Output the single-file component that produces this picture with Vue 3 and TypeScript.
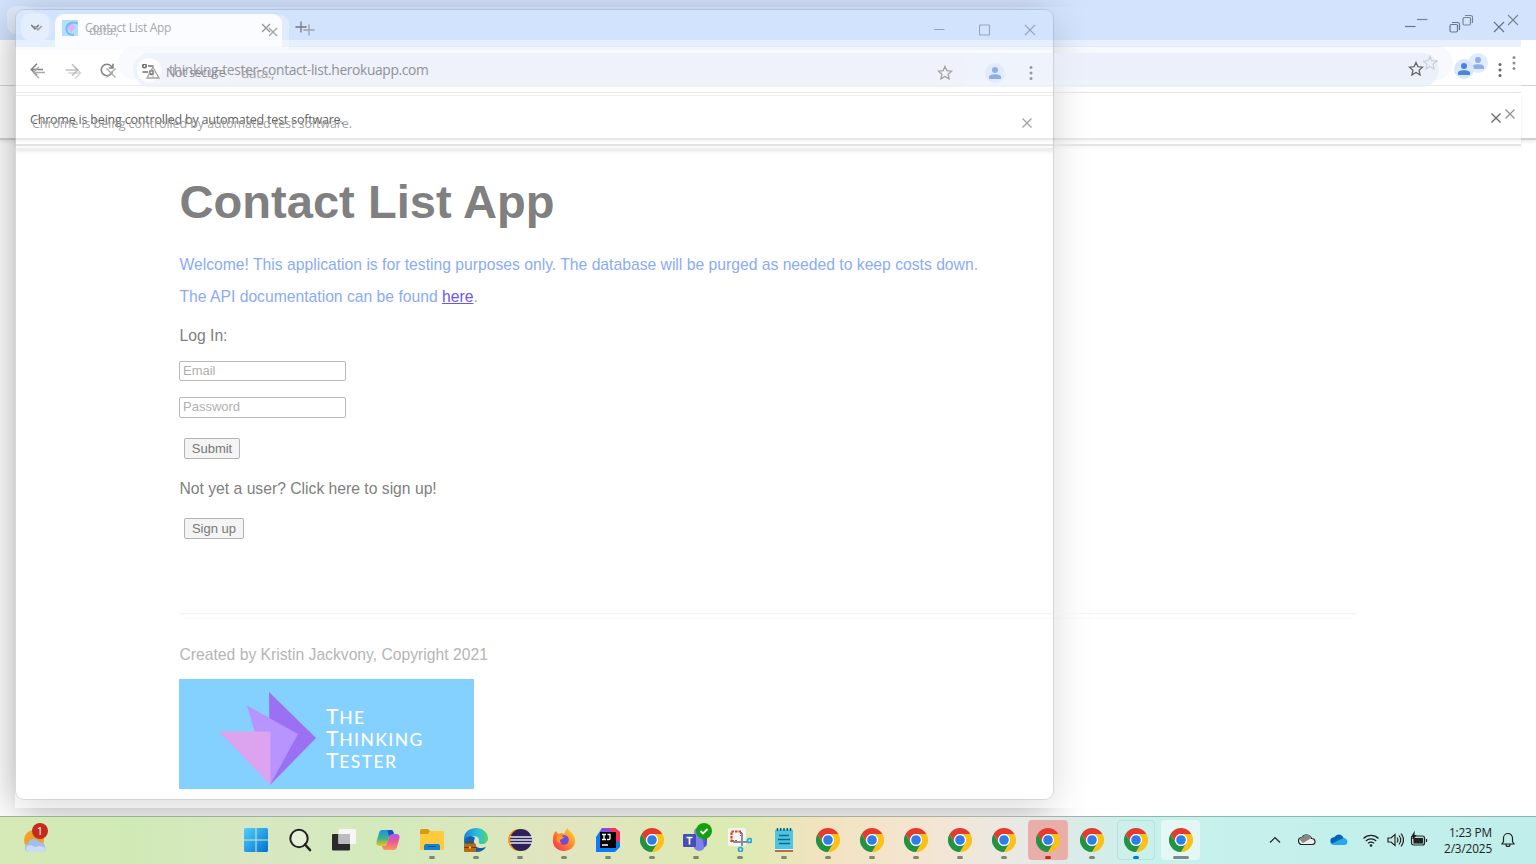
<script setup lang="ts">
interface Win {
  id: string
  title: string
  url: string
  full: boolean
  insecure: boolean
  restore: boolean
}

const windows: Win[] = [
  { id: 'back', title: '', url: '', full: false, insecure: false, restore: true },
  { id: 'mid', title: 'Contact List App', url: 'thinking-tester-contact-list.herokuapp.com', full: true, insecure: false, restore: true },
  { id: 'front', title: 'data:,', url: 'data:,', full: true, insecure: true, restore: false },
]

interface Task { kind: string; state: string }
const t = (kind: string, state = 'run'): Task => ({ kind, state })
const tasks: Task[] = [
  t('start', ''), t('search', ''), t('view', ''), t('copilot', ''),
  t('folder'), t('edge'), t('eclipse'), t('firefox'), t('idea'), t('chrome'),
  t('teams'), t('snip'), t('notepad'),
  t('chrome'), t('chrome'), t('chrome'), t('chrome'), t('chrome'),
  t('chrome', 'alert'), t('chrome'), t('chrome', 'blue'), t('chrome', 'active'),
]
</script>

<template>
  <div class="desktop">
    <div class="shade"></div>
    <section v-for="w in windows" :key="w.id" class="win" :class="w.id">
      <header class="strip">
        <div class="chip"><svg v-if="w.full" width="10" height="10" viewBox="0 0 10 10"><path d="M1.200 3l3.800 3.800L8.800 3" /></svg></div>
        <template v-if="w.full">
          <div class="tab">
            <svg v-if="!w.insecure" class="fav" width="16" height="18" viewBox="0 0 16 18">
              <rect y="1" width="16" height="16" fill="#78ccff" stroke="none" />
              <path d="M9 4l4.500 4.500L9 13.500 4.800 8.500z" fill="#c47df0" stroke="none" />
              <path d="M15.500 4.500C10 2 4 5 4.400 10.500c.4 3.500 3 5.500 7.600 5.500" stroke="#1f7fe8" stroke-width="2" />
            </svg>
            <svg v-else class="fav" width="16" height="16" viewBox="0 0 16 16"></svg>
            <span class="title">{{ w.title }}</span>
            <svg class="x" width="10" height="10" viewBox="0 0 10 10"><path d="M1 1l8 8M9 1l-8 8" /></svg>
          </div>
          <svg class="plus" width="12" height="12" viewBox="0 0 12 12"><path d="M6 .5v11M.5 6h11" /></svg>
        </template>
        <div class="controls">
          <span><svg width="12" height="12" viewBox="0 0 12 12"><path d="M1 5.500h10.500" /></svg></span>
          <span>
            <svg v-if="w.restore" width="12" height="12" viewBox="0 0 12 12"><rect x="1" y="3.500" width="7.500" height="7.500" rx="1.500" /><path d="M3 1.500h5.500a2 2 0 0 1 2 2V9" /></svg>
            <svg v-else width="12" height="12" viewBox="0 0 12 12"><rect x=".5" y="1" width="10" height="10" rx=".6" /></svg>
          </span>
          <span><svg width="12" height="12" viewBox="0 0 12 12"><path d="M1 1l10 10M11 1L1 11" /></svg></span>
        </div>
      </header>

      <div class="toolbar">
        <div class="nav">
          <template v-if="w.full">
            <svg width="14" height="14" viewBox="0 0 14 14"><path d="M13 6.500H1.500M7 .8L1.300 6.500 7 12.200" /></svg>
            <svg class="dim" width="14" height="14" viewBox="0 0 14 14"><path d="M.5 7h12M7 1.200L12.700 7 7 12.800" /></svg>
            <svg v-if="!w.insecure" width="14" height="14" viewBox="0 0 14 14"><path d="M12.500 8.500A5.700 5.700 0 1 1 11.500 3.500L13 5M13 .8V5H8.800" /></svg>
            <svg v-else width="14" height="14" viewBox="0 0 14 14"><path d="M2.500 2.500l9 9M11.500 2.500l-9 9" /></svg>
          </template>
        </div>
        <div class="pill">
          <template v-if="w.full && !w.insecure">
            <span class="site"><svg width="14" height="12" viewBox="0 0 14 12"><circle cx="2.500" cy="2" r="1.700" /><path d="M6 2h5.500M.5 8h5.500" /><circle cx="9.500" cy="8.500" r="1.900" /></svg></span>
            <span class="url">{{ w.url }}</span>
          </template>
          <template v-if="w.insecure">
            <span class="warn"><svg width="14" height="13" viewBox="0 0 14 13"><path d="M7 1.200L13 12H1zM7 5v3.500M7 9.500v1.200" /></svg><span>Not secure</span></span>
            <span class="durl">{{ w.url }}</span>
          </template>
          <svg class="star" width="16" height="16" viewBox="0 0 16 16"><path d="M8 1.400l1.900 4.300 4.700.5-3.500 3.100 1 4.600L8 11.500l-4.100 2.400 1-4.600L1.400 6.200l4.700-.5z" /></svg>
        </div>
        <svg class="user" width="20" height="20" viewBox="0 0 20 20"><circle cx="10" cy="10" r="10" class="ub" /><circle cx="10" cy="7" r="3" class="uf" /><path d="M4 16v-2.200c0-3.400 12-3.400 12 0V16z" class="uf" /></svg>
        <svg class="dots" width="4" height="16" viewBox="0 0 4 16"><circle cx="2" cy="2.500" r="1.500" /><circle cx="2" cy="8" r="1.500" /><circle cx="2" cy="13.500" r="1.500" /></svg>
      </div>

      <div class="infobar">
        <span v-if="w.full">Chrome is being controlled by automated test software.</span>
        <svg width="10" height="10" viewBox="0 0 10 10"><path d="M.5.5l9 9M9.500.5l-9 9" /></svg>
      </div>

      <main v-if="w.id === 'mid'" class="page">
        <h1>Contact List App</h1>
        <p class="welcome">Welcome! This application is for testing purposes only. The database will be purged as needed to keep costs down.</p>
        <p class="api">The API documentation can be found <a>here</a>.</p>
        <p class="login">Log In:</p>
        <div class="field email">Email</div>
        <div class="field pass">Password</div>
        <div class="btn submit">Submit</div>
        <p class="notyet">Not yet a user? Click here to sign up!</p>
        <div class="btn signup">Sign up</div>
        <div class="rule"></div>
        <p class="credit">Created by Kristin Jackvony, Copyright 2021</p>
        <div class="banner">
          <svg width="98" height="94" viewBox="0 0 98 94">
            <path d="M50 0L97 46 51 93z" fill="#9b70f3" />
            <path d="M28 13.500L79 42 51 93z" fill="#b794ff" />
            <path d="M0 39.500h51.500V93z" fill="#dca3ee" />
          </svg>
          <div class="words"><div>T<i>HE</i></div><div>T<i>HINKING</i></div><div>T<i>ESTER</i></div></div>
        </div>
      </main>
      <main v-else-if="w.id === 'back'" class="backpage"><div class="rule2"></div></main>
    </section>

    <footer class="taskbar">
      <div class="weather">
        <svg width="28" height="32" viewBox="0 0 28 32">
          <circle cx="12" cy="17" r="10" fill="#f0a028" />
          <path d="M6 29a4.500 4.500 0 0 1 0-8.500 6 6 0 0 1 11-1.500c4 0 6 2.500 6 5 1.500 2.500 0 5-2 5z" fill="#a3bdec" />
          <path d="M6 29a4 4 0 0 1-1-6 8 8 0 0 1 8 1c4-2 8-1 10 1 .5 2-.5 4-2 4z" fill="#cbdbf7" />
        </svg>
        <b>1</b>
      </div>
      <div class="apps">
        <div v-for="(a, i) in tasks" :key="i" class="app" :class="a.state">
          <svg v-if="a.kind === 'chrome'" width="24" height="24" viewBox="0 0 24 24">
            <path d="M1.600 6A12 12 0 0 1 22.400 6H12a6 6 0 0 0-5.200 9z" fill="#e33b2e" />
            <path d="M22.400 6A12 12 0 0 1 12 24l5.200-9A6 6 0 0 0 12 6z" fill="#fbc116" />
            <path d="M12 24A12 12 0 0 1 1.600 6l5.200 9a6 6 0 0 0 10.400 0z" fill="#229342" />
            <circle cx="12" cy="12" r="6" fill="#fff" /><circle cx="12" cy="12" r="4.800" fill="#2f7de9" />
          </svg>
          <svg v-else-if="a.kind === 'start'" width="24" height="24" viewBox="0 0 24 24">
            <defs><linearGradient id="st" x1="0" y1="0" x2="1" y2="1" gradientUnits="objectBoundingBox"><stop offset="0" stop-color="#4fd0fb" /><stop offset="1" stop-color="#0072d0" /></linearGradient></defs>
            <path d="M1 0h10.500v11.500H0V1zM12.500 0H23l1 1v10.500H12.500zM0 12.500h11.500V24H1l-1-1zM12.500 12.500H24V23l-1 1H12.500z" fill="url(#st)" />
          </svg>
          <svg v-else-if="a.kind === 'search'" width="24" height="24" viewBox="0 0 24 24" fill="none" stroke="#222"><circle cx="11" cy="10.500" r="8.700" stroke-width="2" fill="#ffffff66" /><path d="M17 16.500l5 5.500" stroke-width="2.600" stroke-linecap="round" /></svg>
          <svg v-else-if="a.kind === 'view'" width="24" height="24" viewBox="0 0 24 24"><rect y="6" width="18" height="16.500" rx="1" fill="#2b2b2b" /><rect x="6.500" y="1" width="17.500" height="15" rx="1" fill="#f6f6f6" /><path d="M6.500 6H18v10H6.500z" fill="#bcbcbc" /></svg>
          <svg v-else-if="a.kind === 'copilot'" width="24" height="24" viewBox="0 0 24 24">
            <defs>
              <linearGradient id="c1" x1="0" y1="0" x2="0" y2="1"><stop offset="0" stop-color="#1d8fe8" /><stop offset=".55" stop-color="#3fb489" /><stop offset="1" stop-color="#f2c811" /></linearGradient>
              <linearGradient id="c2" x1="0" y1="0" x2="0" y2="1"><stop offset="0" stop-color="#a75cf0" /><stop offset=".5" stop-color="#ef5a8e" /><stop offset="1" stop-color="#fb9a58" /></linearGradient>
            </defs>
            <path d="M7 2h8c2 0 2.500 2 3 4h-2c-3 0-3 3-4 6-1 4-2 6-5 6H4c-4 0-4-3-3-6l1.500-5C3.500 3 4 2 7 2z" fill="url(#c1)" />
            <path d="M11.500 2H15c2 0 2.500 2 3 5l-5 1z" fill="#1c50b8" />
            <path d="M17 22H9c-2 0-2.500-2-3-4h2c3 0 3-3 4-6 1-4 2-6 5-6h3c4 0 4 3 3 6l-1.500 5c-1 4-1.500 5-4.500 5z" fill="url(#c2)" />
          </svg>
          <svg v-else-if="a.kind === 'folder'" width="24" height="24" viewBox="0 0 24 24"><path d="M0 3q0-2 2-2h6l2 2v4H0z" fill="#d99a10" /><path d="M0 6h8l2-3h13l1 1v17q0 1-1 1H1q-1 0-1-1z" fill="#fecb3e" /><path d="M4 22v-4q0-2 2-2h12q2 0 2 2v4z" fill="#1481d2" /><path d="M8 18.500h8" stroke="#0a5aa0" /></svg>
          <svg v-else-if="a.kind === 'edge'" width="24" height="24" viewBox="0 0 24 24">
            <defs><linearGradient id="ed"><stop offset="0" stop-color="#1883d8" /><stop offset=".55" stop-color="#2bbce0" /><stop offset="1" stop-color="#51d66b" /></linearGradient></defs>
            <path d="M0 13C-1 5 5 0 12 0s12 5 12 10c0 4-3 6-6 6-4 0-3-2-3-4 0-3-4-5-8-3-4 1-6 3-7 4z" fill="url(#ed)" />
            <path d="M0 13c2-5 8-6 11-3-3 5 1 11 7 10l4-1c-3 5-9 6-13 4H1z" fill="#1560ae" />
            <rect y="15.500" width="12" height="8.500" rx="1" fill="#b86a16" /><path d="M0 19.500h12" stroke="#6e3d0c" /><path d="M4 15.500v-1.500h4v1.500" stroke="#6e3d0c" fill="none" /><rect x="5" y="18.500" width="2" height="2" fill="#f5c64c" />
          </svg>
          <svg v-else-if="a.kind === 'eclipse'" width="24" height="24" viewBox="0 0 24 24"><circle cx="11" cy="12" r="11" fill="#f7941e" /><circle cx="13" cy="12" r="11" fill="#2c2255" /><path d="M2 9h22M2 12h22M2 15h22" stroke="#e8e8f4" stroke-width="1.400" /></svg>
          <svg v-else-if="a.kind === 'firefox'" width="24" height="24" viewBox="0 0 24 24">
            <defs><linearGradient id="ff" x1="1" y1="0" x2="0" y2="1"><stop offset="0" stop-color="#ffe03a" /><stop offset=".5" stop-color="#ff8427" /><stop offset="1" stop-color="#f5245e" /></linearGradient></defs>
            <path d="M4 3l2 3 3-1c2 0 3 1 3 1l3-6c2 2 5 5 7 8 4 9-3 15-10 15C4 23 0 17 1 11c0-4 1-6 3-8z" fill="url(#ff)" /><circle cx="12" cy="12" r="4.800" fill="#7547db" /><path d="M5 8c4-1 6 0 7 2-2 1-4 1-4 3 0 1 1 2 2 2-3 1-6-2-5-7z" fill="#ff9a26" />
          </svg>
          <svg v-else-if="a.kind === 'idea'" width="24" height="24" viewBox="0 0 24 24"><path d="M6 0h13l5 4v15l-5 5H0V9z" fill="#087cfa" /><path d="M12 0h7l5 4v11l-6-4z" fill="#fe315d" /><path d="M6 0h7l4 6-13 1z" fill="#8d4ad8" /><rect x="4" y="4" width="16" height="16" fill="#000" /><path d="M6 6.500h4M8 6.500v5M6 11.500h4M11.500 6.500h2.500v4q0 1-1 1h-2M6 17h6" fill="none" stroke="#fff" stroke-width="1.300" /></svg>
          <svg v-else-if="a.kind === 'teams'" class="teams" width="32" height="30" viewBox="0 0 32 30">
            <circle cx="16" cy="9" r="4" fill="#7b83eb" /><path d="M10 12h13v11a6 6 0 0 1-11 2z" fill="#7b83eb" /><path d="M20 12h5v8q0 4-3 4z" fill="#5059c9" /><rect x="1" y="11" width="13" height="13" rx="1" fill="#464eb8" /><path d="M4.500 14.500h6M7.500 14.500v7" stroke="#fff" stroke-width="1.700" /><circle cx="22" cy="8" r="8" fill="#13a10e" /><path d="M18.500 8l2.500 2.500 4.500-4.500" fill="none" stroke="#fff" stroke-width="1.800" />
          </svg>
          <svg v-else-if="a.kind === 'snip'" width="24" height="24" viewBox="0 0 24 24"><rect width="18" height="18" rx="2" fill="#f4f4f4" /><path d="M13 3.500H3.500V14" fill="none" stroke="#d2451e" stroke-width="2.200" stroke-dasharray="2.500 1" /><path d="M13 4v4M4 13h6" stroke="#d2451e" stroke-width="2" stroke-dasharray="2 1" /><path d="M14 5v13M5 14h14" stroke="#858d96" stroke-width="2" /><circle cx="21.500" cy="12.500" r="2" fill="none" stroke="#27a3dd" stroke-width="1.700" /><circle cx="12.500" cy="21.500" r="2" fill="none" stroke="#27a3dd" stroke-width="1.700" /></svg>
          <svg v-else-if="a.kind === 'notepad'" width="24" height="24" viewBox="0 0 24 24"><rect x="3" y="1.500" width="18" height="20.500" rx="1" fill="#4fc4e0" /><path d="M3 23h18" stroke="#9a5430" stroke-width="1.600" /><path d="M3 21.500h18" stroke="#eee" /><path d="M5.500 0v3M8.700 0v3M12 0v3M15.300 0v3M18.500 0v3" stroke="#0c5f85" stroke-width="1.500" /><path d="M7 7.500h10M6 11.500h12M7 15.500h11" stroke="#09688e" stroke-width="1.300" /></svg>
          <em></em>
        </div>
      </div>
      <div class="tray">
        <svg width="32" height="20" viewBox="0 0 32 20"><path d="M11 12.500l5-5 5 5" /></svg>
        <svg width="32" height="20" viewBox="0 0 32 20"><path d="M11 14.500a3.500 3.500 0 0 1 0-7A5.300 5.300 0 0 1 20.500 8.500c4-.2 5 5.500 1 6z" fill="#eee" /><path d="M9 10c0-2 1-3 3-3 2-4 7-3 8.500 1L12 13z" fill="#888" stroke="none" /></svg>
        <svg width="32" height="20" viewBox="0 0 32 20"><path d="M11 15a3.700 3.700 0 0 1 0-7.500A5.500 5.500 0 0 1 20.500 8c5 0 5 7 1 7z" fill="#28a8ea" stroke="none" /><path d="M9 13.500C6 9 9 7 11.500 7.500 14 3 19 4 20.500 8z" fill="#0364b8" stroke="none" /></svg>
        <svg width="32" height="20" viewBox="0 0 32 20"><path d="M8.500 8.500a10.600 10.600 0 0 1 15 0M10.800 11a7.300 7.300 0 0 1 10.400 0M13 13.300a4.200 4.200 0 0 1 6 0" /><circle cx="16" cy="15.500" r="1.300" fill="#222" stroke="none" /></svg>
        <svg class="spk" width="18" height="20" viewBox="0 0 18 20"><path d="M2 8h3l4-3.500v11L5 12H2zM11 7.500q2 2.500 0 5M13 5.500q3.500 4.500 0 9M15 3.500q5 6.500 0 13" /></svg>
        <svg class="bat" width="18" height="20" viewBox="0 0 18 20"><rect x="1.500" y="6" width="13" height="9" rx="2" /><rect x="4" y="8.500" width="8.500" height="4.500" fill="#222" /><path d="M16.500 9v3M4 3L2 6.500h1.500L3 9l2.500-3.500H4z" fill="#222" /></svg>
        <div class="clock"><span>1:23 PM</span><span>2/3/2025</span></div>
        <svg width="16" height="20" viewBox="0 0 16 20"><path d="M2 14h12l-1.500-2.500V8A4.500 4.500 0 0 0 3.500 8v3.500zM6 14.500a2 2 0 0 0 4 0" /></svg>
      </div>
    </footer>
  </div>
</template>

<style>
html, body { margin: 0; overflow: hidden; }
</style>

<style scoped>
* { box-sizing: border-box; }
svg { display: block; flex: none; }
.desktop { position: relative; width: 1536px; height: 864px; overflow: hidden; background: #fff; font-family: "Open Sans", "Noto Sans", sans-serif; }
.win { position: absolute; display: flex; flex-direction: column; color: #555; }
.win svg { fill: none; stroke: #666; stroke-width: 1.3; }
.win.back svg { stroke: #222; }
.win.front svg { stroke: #a2a2a2; }
.back { left: 0; top: 0; width: 1536px; height: 816px; }
.shade { position: absolute; z-index: 1; left: 16px; top: 10px; width: 1037px; height: 789px; border-radius: 8px; box-shadow: 0 9px 38px rgba(0, 0, 0, .36); }
.mid { z-index: 2; left: 15px; top: 7px; width: 1506px; height: 801px; }
.front { z-index: 3; left: 16px; top: 10px; width: 1037px; height: 789px; border-radius: 8px; box-shadow: 0 0 0 1px rgba(0, 0, 0, .09); overflow: hidden; pointer-events: none; }

.strip { display: flex; flex: none; height: 40px; background: #d3e3fd; }
.mid .strip { background: rgba(211, 227, 253, .5); }
.front .strip { background: rgba(211, 227, 253, .15); }
.chip { width: 28px; height: 28px; margin: 6px 0 0 7px; border-radius: 9px; background: #e3edfd; display: flex; align-items: center; justify-content: center; }
.mid .chip { background: #e6effd; margin: 6px 0 0 6px; }
.front .chip { background: rgba(235, 242, 254, .3); margin: 4px 0 0 8px; }
.win .chip svg { stroke-width: 1.6; }
.win.mid .chip svg { stroke: #222; }
.tab { display: flex; align-items: center; width: 227px; margin: 7px 0 0 6px; padding: 0 11px 6px 7px; border-radius: 9px 9px 0 0; background: #fff; }
.front .tab { margin: 5px 0 0 6px; width: 231px; padding: 0 11px 1px 9px; background: rgba(255, 255, 255, .35); }
.title { font-size: 12px; margin-left: 7px; white-space: nowrap; letter-spacing: -.3px; color: #666; }
.front .title { margin: -4px 0 0 6px; color: #aaa; }
.front .x { margin-top: -1px; }
.x { margin-left: auto; }
.win.mid .x { stroke: #444; }
.plus { margin: 14px 0 0 13px; }
.front .plus { margin-top: 14px; margin-left: 14px; }
.controls { margin-left: auto; display: flex; height: 39px; }
.controls span { width: 45.5px; display: flex; align-items: center; justify-content: center; }
.mid .controls span { width: 44.3px; }
.win .controls svg { stroke-width: 1.2; }
.win.mid .controls svg { stroke: #66748a; }
.win.front .controls svg { stroke: #98a6bd; }

.toolbar { display: flex; flex: none; align-items: center; height: 46px; background: #fff; border-bottom: 1px solid #d2d5d4; }
.mid .toolbar { background: rgba(255, 255, 255, .5); border-bottom: 1px solid #e5e5e5; border-radius: 0 8px 0 0; }
.front .toolbar { background: rgba(255, 255, 255, .2); border-bottom: 1px solid #efefef; border-radius: 8px 8px 0 0; }
.back .toolbar { border-radius: 0 8px 0 0; }
.nav { width: 118px; display: flex; gap: 21px; padding-left: 15px; }
.front .nav { width: 120px; padding-left: 16px; gap: 22px; }
.nav svg.dim { opacity: .5; }
.mid .nav svg { stroke-width: 1.6; }
.win.front .nav svg { stroke: #aaa; }
.pill { flex: 1; height: 34px; border-radius: 17px; background: #eef2fb; display: flex; align-items: center; padding: 0 15px 0 4px; min-width: 0; }
.mid .pill { background: rgba(231, 237, 249, .7); }
.front .pill { background: rgba(236, 240, 250, .12); }
.site { width: 24px; height: 24px; border-radius: 12px; background: #fff; display: flex; align-items: center; justify-content: center; }
.win.mid .site svg { stroke: #222; stroke-width: 1.6; }
.url { margin-left: 8px; font-size: 13.8px; letter-spacing: -.35px; color: #63666c; white-space: nowrap; }
.warn { display: flex; align-items: center; height: 24px; border-radius: 12px; padding: 0 10px 0 6px; gap: 6px; background: rgba(255, 255, 255, .1); font-size: 12.5px; letter-spacing: -.4px; color: #8c8c8c; white-space: nowrap; width: 92px; }
.front .durl { margin-left: 9px; font-size: 13.5px; color: #a5a5a5; letter-spacing: -.3px; }
.star { margin-left: auto; }
.mid .star, .mid .user { margin-top: -2px; }
.win .user { margin-left: 15px; }
.front .user { margin-left: 17px; }
.ub { fill: #d9e7fd; stroke: none; }
.uf { fill: #4a83dc; stroke: none; }
.back .uf { fill: #1a5cd0; }
.back .ub { fill: #c3d9fc; }
.front .user { opacity: .6; }
.win .dots { margin: 0 20px 0 24px; }
.mid .dots { margin-right: 19px; }
.win .dots circle { fill: #666; stroke: none; }
.back .dots circle { fill: #222; }
.front .dots circle { fill: #999; }
.infobar { flex: none; display: flex; align-items: center; justify-content: space-between; height: 54px; padding: 3px 21px 0 15px; border-bottom: 2px solid #cfd2d0; box-shadow: 0 2px 3px rgba(0, 0, 0, .08); font-size: 12.5px; letter-spacing: -.22px; }
.mid .infobar { height: 53px; background: rgba(255, 255, 255, .5); border-bottom-color: #e2e4e3; padding: 2px 20px 0 15px; color: #606060; letter-spacing: -.2px; }
.front .infobar { height: 54px; color: #a2a2a2; border-bottom: 2px solid #ecefed; padding: 2px 21px 0 16px; letter-spacing: -.08px; }
.infobar svg { margin-left: auto; }
.mid .infobar svg { margin-top: -3px; }
.backpage { padding: 478px 0 0 183px; }
.rule2 { width: 1170px; height: 1px; background: #f6f6f6; }

.page { flex: 1; padding: 28px 0 0 164px; background: rgba(255, 255, 255, .6); font-family: "Liberation Sans", Arial, sans-serif; color: #808080; }
.page p { margin: 0; padding-left: .5px; height: 24px; line-height: 24px; font-size: 15.7px; white-space: nowrap; }
h1 { margin: 0; padding-left: .5px; height: 56px; line-height: 56px; font-size: 47.1px; font-weight: bold; color: #808080; white-space: nowrap; }
.page .welcome { margin-top: 23px; color: #8aacf6; }
.page .api { margin-top: 8px; color: #8aacf6; }
.api a { color: #6a55ee; text-decoration: underline; }
.page .login { margin-top: 15px; }
.field { width: 167px; height: 21px; border: 1px solid #bababa; border-radius: 2px; padding-left: 3px; font-size: 13px; line-height: 18px; color: #b0b0b0; }
.email { margin-top: 13px; line-height: 17px; height: 20px; }
.pass { margin-top: 16px; }
.btn { height: 21px; margin-left: 5px; border: 1px solid #b4b4b4; border-radius: 2px; background: #f4f4f4; font-size: 13px; line-height: 19px; text-align: center; color: #777; }
.submit { width: 56px; margin-top: 20px; }
.page .notyet { margin-top: 18px; }
.signup { width: 60px; margin-top: 17px; }
.rule { width: 1178px; height: 1px; margin-top: 74px; background: #f4f4f4; }
.page .credit { margin-top: 29px; color: #b5b5b5; }
.banner { width: 295px; height: 110px; margin-top: 12px; background: #84d0ff; display: flex; padding: 13px 0 0 40px; }
.win .banner svg { stroke: none; }
.words { margin: 13px 0 0 9px; font-family: Lato, sans-serif; font-size: 21px; line-height: 22px; color: #fff; font-weight: 500; letter-spacing: .8px; }
.words div { height: 22px; }
.words i { font-style: normal; font-size: 17.5px; line-height: 0; letter-spacing: 1.4px; }

.taskbar { position: absolute; z-index: 5; left: 0; right: 0; bottom: 0; height: 48px; display: flex; border-top: 1px solid rgba(80, 110, 100, .45); background: linear-gradient(90deg, #d6eab6 0, #d0eab6 130px, #d8e7c2 250px, #d3eabb 380px, #e2e5c0 570px, #dcebb2 740px, #f1e3bf 820px, #f4e5d3 930px, #e9e9e5 1020px, #dcebe8 1070px, #c8f1eb 1150px, #bfeeeb 1536px); }
.weather { position: relative; width: 233.5px; padding: 6px 0 0 22px; }
.weather b { position: absolute; left: 32px; top: 6px; width: 16px; height: 16px; border-radius: 8px; background: #c42b1c; color: #fff; font-size: 11px; line-height: 16px; text-align: center; font-weight: 400; }
.apps { display: flex; }
.app { width: 38.06px; height: 40px; margin: 3px 3px 0; display: flex; flex-direction: column; align-items: center; padding-top: 8px; border-radius: 4px; }
.app em { width: 6px; height: 3px; border-radius: 2px; margin-top: 4px; }
.run em { background: #808670; }
.teams { margin: -5px -4px -1px 0; }
.alert { background: #e9aea9; width: 40.06px; margin: 3px 2px 0; }
.alert em { background: #c42b1c; }
.blue { border: 1px solid #b5e4df; padding-top: 7px; }
.blue em { background: #0078d4; }
.active { background: rgba(255, 255, 255, .5); }
.active em { width: 16px; background: #7b8a88; }
.tray { display: flex; align-items: center; margin-left: auto; padding-right: 20px; height: 46px; }
.tray svg { fill: none; stroke: #222; stroke-width: 1.2; }
.spk { margin-left: -1px; }
.tray .bat { margin-left: 6px; }
.clock { width: 64px; display: flex; flex-direction: column; align-items: flex-end; font-size: 11.8px; line-height: 16px; letter-spacing: -.15px; color: #222; margin: -1px 8px 0 0; }
</style>
